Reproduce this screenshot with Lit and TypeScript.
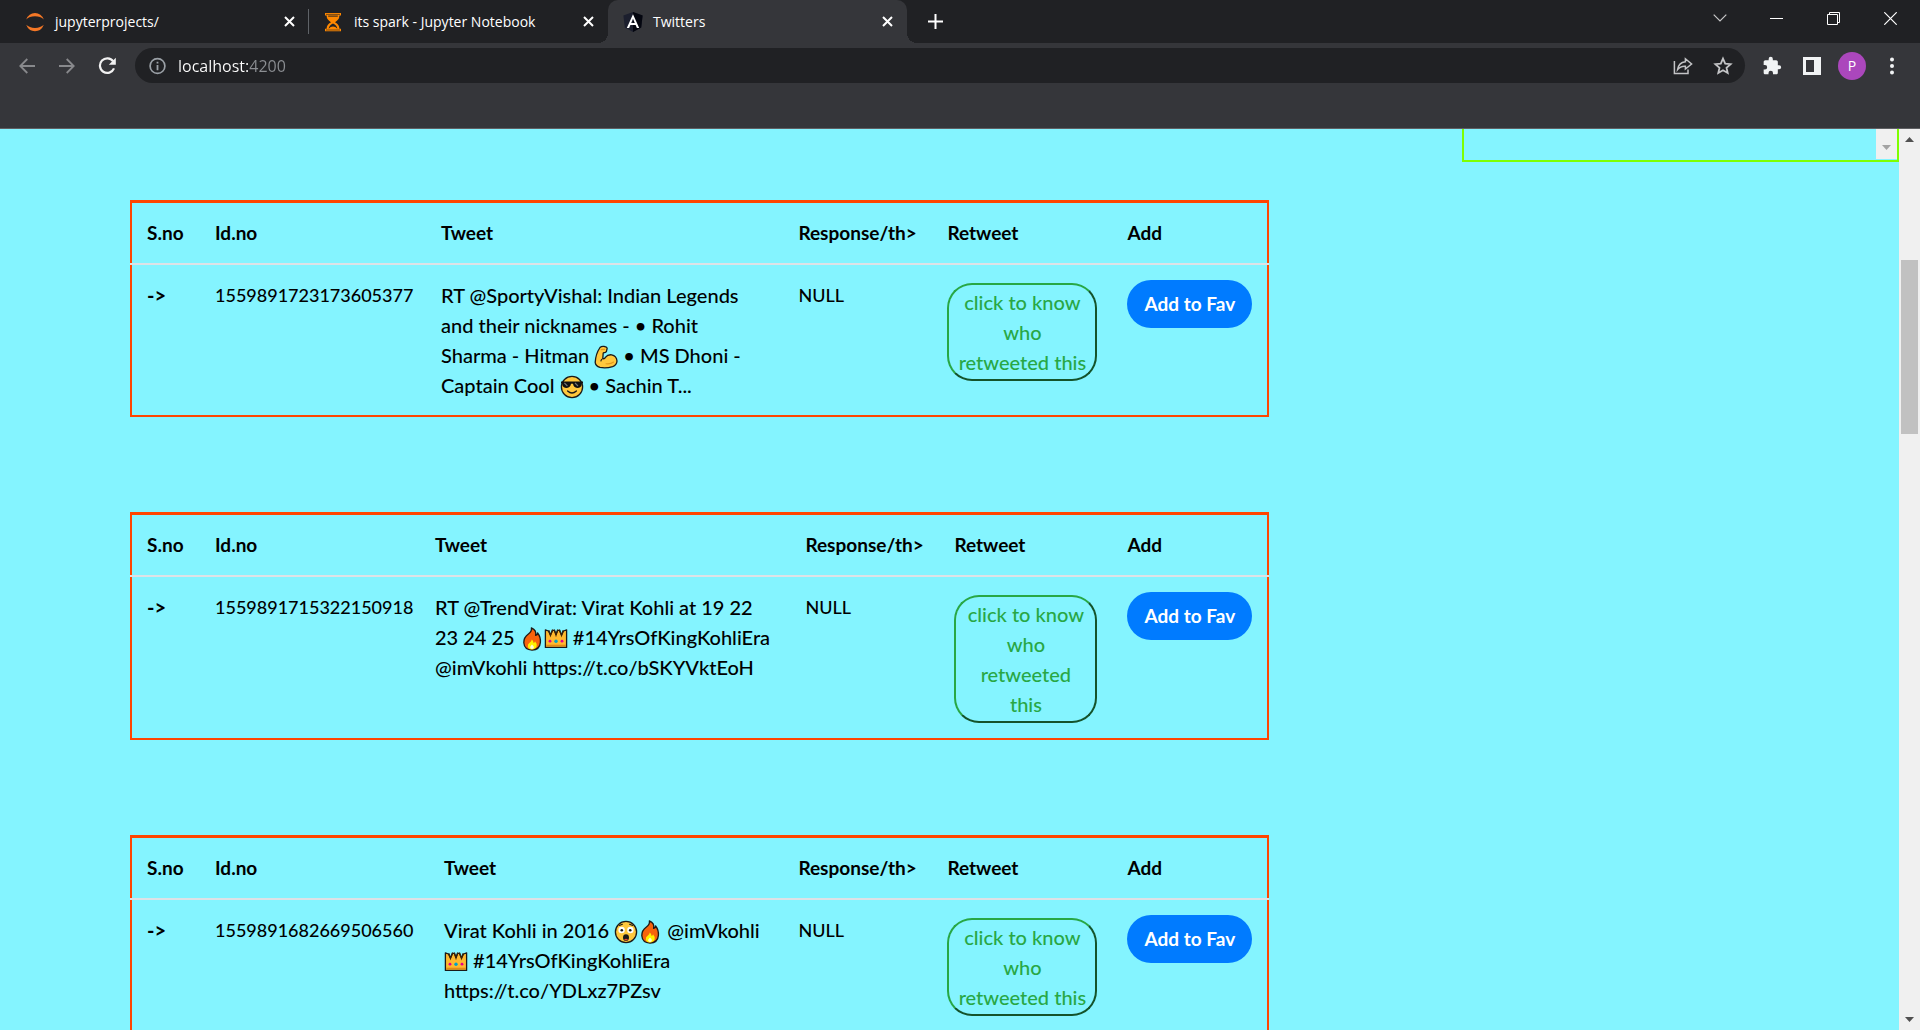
import { LitElement, html, css, svg, nothing } from "lit";
import { customElement, property } from "lit/decorators.js";
import { styleMap } from "lit/directives/style-map.js";

type EmojiName = "biceps" | "cool" | "fire" | "crown" | "astonished";
type Piece = string | { emoji: EmojiName };

interface Tweet {
  id: string;
  lines: Piece[][];
  response: string;
  retweetLabel: string;
  columns: { id: number; response: number; retweet: number };
}

const e = (emoji: EmojiName): Piece => ({ emoji });

const TWEETS: Tweet[] = [
  {
    id: "1559891723173605377",
    lines: [
      ["RT @SportyVishal: Indian Legends"],
      ["and their nicknames - • Rohit"],
      ["Sharma - Hitman ", e("biceps"), " • MS Dhoni -"],
      ["Captain Cool ", e("cool"), " • Sachin T..."],
    ],
    response: "NULL",
    retweetLabel: "click to know\nwho\nretweeted this",
    columns: { id: 226, response: 149, retweet: 180 },
  },
  {
    id: "1559891715322150918",
    lines: [
      ["RT @TrendVirat: Virat Kohli at 19 22"],
      ["23 24 25 ", e("fire"), e("crown"), " #14YrsOfKingKohliEra"],
      ["@imVkohli https://t.co/bSKYVktEoH"],
    ],
    response: "NULL",
    retweetLabel: "click to know\nwho\nretweeted\nthis",
    columns: { id: 220, response: 149, retweet: 173 },
  },
  {
    id: "1559891682669506560",
    lines: [
      ["Virat Kohli in 2016 ", e("astonished"), e("fire"), " @imVkohli"],
      [e("crown"), " #14YrsOfKingKohliEra"],
      ["https://t.co/YDLxz7PZsv"],
    ],
    response: "NULL",
    retweetLabel: "click to know\nwho\nretweeted this",
    columns: { id: 229, response: 149, retweet: 180 },
  },
];

const EMOJI = {
  biceps: {
    label: "flexed biceps",
    art: svg`
      <path d="M6 2.5 Q7.5 1 10 1.4 L12.4 2.2 Q13.6 3 12.8 4.6 L12.4 6.6 Q11.8 8 10 7.6 L9.2 8 L8.8 13.4 Q10.2 14.4 11.4 12.4 Q13.6 9.4 17.6 9.8 Q22.6 10.8 23 16 Q22.8 20 18.6 21.6 Q12 23.6 6 22.4 Q1.6 21.2 1.2 17.4 Q1.6 9 6 2.5Z" fill="#ffc83d" stroke="#1b1a19" stroke-width="1.3" stroke-linejoin="round"/>
      <path d="M7.2 4.6 L10.6 4.4 M12 18.8 Q16.6 19.4 19.6 17" fill="none" stroke="#e59a1c" stroke-width="1.1" stroke-linecap="round"/>
      <path d="M8.6 13.6 Q7 14.6 6.8 16.4" fill="none" stroke="#1b1a19" stroke-width="1.1"/>`,
  },
  cool: {
    label: "smiling face with sunglasses",
    art: svg`
      <circle cx="12" cy="12" r="10.6" fill="#ffc83d" stroke="#1b1a19" stroke-width="1.3"/>
      <path d="M1 6.4 H23 V8.4 H21.8 Q21.4 13 17.2 13 Q13.6 12.8 13 8.8 H11 Q10.4 12.8 6.8 13 Q2.6 13 2.2 8.4 H1Z" fill="#111"/>
      <path d="M4.4 8 L7.4 11 M15 8 L18 11" stroke="#767676" stroke-width="1.1"/>
      <path d="M7.6 16 Q12 20 16.4 16" fill="none" stroke="#1b1a19" stroke-width="1.3" stroke-linecap="round"/>`,
  },
  fire: {
    label: "fire",
    art: svg`
      <path d="M11.4 .8 Q16.8 3 15.6 8.4 Q17.8 7.8 17.6 6 Q20.8 10 20.4 15.4 Q19.8 22.8 12 23.2 Q4.4 22.8 3.8 15.8 Q3.6 10.4 8.4 7 Q12 4.4 11.4 .8Z" fill="#f7630c" stroke="#1b1a19" stroke-width="1.3" stroke-linejoin="round"/>
      <path d="M11.8 12.6 Q13.4 14 13.6 16 Q15.2 15.4 15 14.2 Q17.6 17 16.6 19.6 Q15.4 22.4 12 22.4 Q8.4 22.2 7.8 19.4 Q7.6 17.2 9.6 15.8 Q11.6 14.6 11.8 12.6Z" fill="#fff100"/>
      <path d="M12 17.6 Q14.4 19.4 13.8 21 Q12 22.8 10.2 21 Q9.8 19.4 12 17.6Z" fill="#fffbd6"/>`,
  },
  crown: {
    label: "crown",
    art: svg`
      <path d="M1.4 2.8 L4.4 4 L6.4 8 L8.6 3.4 L10.4 3.4 L12 7.4 L13.6 3.4 L15.4 3.4 L17.6 8 L19.6 4 L22.6 2.8 V20.4 H1.4Z" fill="#ffb92e" stroke="#1b1a19" stroke-width="1.3" stroke-linejoin="round"/>
      <path d="M5 3.6 L6.5 8.4 L8.4 3 M10.4 3 L12 8 L13.6 3 M15.6 3 L17.5 8.4 L19 3.6" fill="none" stroke="#3a2208" stroke-width="1.3" stroke-linecap="round"/>
      <path d="M2.2 18.4 H21.8" stroke="#e58a14" stroke-width="1.4"/>
      <circle cx="6" cy="14.2" r="1.4" fill="#e3008c"/>
      <circle cx="12" cy="14.2" r="1.7" fill="#00a2c9"/>
      <circle cx="18" cy="14.2" r="1.4" fill="#e3008c"/>`,
  },
  astonished: {
    label: "astonished face",
    art: svg`
      <circle cx="12" cy="12" r="10.6" fill="#ffc83d" stroke="#1b1a19" stroke-width="1.3"/>
      <path d="M5.4 5.4 L8.4 4.2 M15.6 4.2 L18.6 5.4" stroke="#1b1a19" stroke-width="1.1" stroke-linecap="round"/>
      <circle cx="7.6" cy="10" r="3.2" fill="#fff"/>
      <circle cx="16.4" cy="10" r="3.2" fill="#fff"/>
      <circle cx="7.8" cy="10.2" r="1.3" fill="#1b1a19"/>
      <circle cx="16.2" cy="10.2" r="1.3" fill="#1b1a19"/>
      <ellipse cx="12" cy="17.6" rx="3" ry="3.4" fill="#1b1a19"/>
      <path d="M10 19.6 Q12 18 14 19.6 Q12 21.6 10 19.6Z" fill="#e8463a"/>`,
  },
};

const ICONS = {
  jupyter: svg`<path d="M1.2 7.4 Q3.8 .9 10 .9 Q16.2 .9 18.8 7.4 Q15.6 4.3 10 4.3 Q4.4 4.3 1.2 7.4Z M1.2 12.8 Q3.8 19.3 10 19.3 Q16.2 19.3 18.8 12.8 Q15.6 15.9 10 15.9 Q4.4 15.9 1.2 12.8Z" fill="#f37726"/>`,
  hourglass: svg`<path d="M1 1 H17 V3.6 H15.4 Q15.4 8 11 10.2 Q15.4 12.6 15.4 16.8 H17 V19.2 H1 V16.8 H2.6 Q2.6 12.6 7 10.2 Q2.6 8 2.6 3.6 H1Z" fill="#ff8800"/>
    <path d="M2 2.4 H16 M2 18 H16" stroke="#202124" stroke-width=".6"/>
    <path d="M4.6 16.8 Q5 13.2 9 11.4 Q13 13.2 13.4 16.8 Q11.4 14.6 9 14.6 Q6.6 14.6 4.6 16.8Z" fill="#202124"/>
    <path d="M4.2 3.6 H13.8 V4.6 H4.2Z" fill="#202124"/>`,
  angular: svg`<path d="M10 0 L19.6 3.4 L18.2 15.6 L10 20 L1.8 15.6 L.4 3.4Z" fill="#1c1f2e"/>
    <path d="M10 0 L19.6 3.4 L18.2 15.6 L10 20Z" fill="#04060f"/>
    <path fill-rule="evenodd" d="M10 2.3 L16.2 16 H13.9 L12.6 12.9 H7.4 L6.1 16 H3.8Z M10 6.7 L8.2 11 H11.8Z" fill="#fff"/>`,
};

const baseButton = css`
  button {
    border: 0;
    margin: 0;
    padding: 0;
    background: none;
    color: inherit;
    font: inherit;
    display: flex;
    align-items: center;
    justify-content: center;
    cursor: pointer;
  }
  svg {
    display: block;
  }
`;

@customElement("browser-chrome")
export class BrowserChrome extends LitElement {
  static styles = [
    baseButton,
    css`
      :host {
        display: block;
        flex: none;
        background: #35363a;
        color: #fff;
        border-bottom: 1px solid #5f6063;
        font-family: "Open Sans", "Noto Sans", sans-serif;
      }
      .strip {
        display: flex;
        height: 43px;
        padding-left: 10px;
        background: #202124;
      }
      .tab {
        position: relative;
        display: flex;
        align-items: center;
        flex: 0 1 299px;
        box-sizing: border-box;
        padding: 0 14px 0 15px;
        font-size: 14px;
      }
      .tab.split::after {
        content: "";
        position: absolute;
        right: 0;
        top: 9px;
        width: 1px;
        height: 25px;
        background: #5f6368;
      }
      .tab.active {
        background: #35363a;
        border-radius: 10px 10px 0 0;
      }
      .tab.active::before,
      .tab.active::after {
        content: "";
        position: absolute;
        bottom: 0;
        width: 10px;
        height: 10px;
      }
      .tab.active::before {
        left: -10px;
        background: radial-gradient(circle at 0 0, #202124 10px, #35363a 10px);
      }
      .tab.active::after {
        right: -10px;
        background: radial-gradient(circle at 100% 0, #202124 10px, #35363a 10px);
      }
      .tab .title {
        flex: 1;
        justify-content: flex-start;
        gap: 10px;
        white-space: nowrap;
        line-height: 20px;
      }
      .newtab {
        width: 56px;
      }
      .window {
        display: flex;
        height: 36px;
        margin-left: auto;
        padding-right: 1px;
      }
      .window button {
        width: 57px;
      }
      .toolbar {
        display: flex;
        align-items: center;
        height: 35px;
        padding: 5px 8px 45px 7px;
      }
      .tool {
        width: 40px;
        height: 35px;
      }
      .omnibox {
        flex: 1;
        display: flex;
        align-items: center;
        height: 35px;
        margin: 0 7px 0 8px;
        padding: 0 2px 0 13px;
        border-radius: 18px;
        background: #202124;
      }
      .omnibox input {
        flex: 1;
        min-width: 0;
        margin: 0 0 0 12px;
        padding: 0;
        border: 0;
        outline: 0;
        font: 16px/24px "Open Sans", "Noto Sans", sans-serif;
        color: transparent;
        background: linear-gradient(to right, #fff 71px, #8b8e92 71px);
        -webkit-background-clip: text;
        background-clip: text;
      }
      .avatar {
        width: 28px;
        height: 28px;
        border-radius: 50%;
        background: #ab47bc;
        font-size: 14px;
        line-height: 28px;
      }
    `,
  ];

  private tab(title: string, icon: keyof typeof ICONS, cls: string) {
    return html`<div class="tab ${cls}">
      <button class="title">
        <svg width="20" height="20" viewBox="0 0 20 20" aria-hidden="true">${ICONS[icon]}</svg>
        ${title}
      </button>
      <button aria-label="Close tab">
        <svg width="11" height="11" viewBox="0 0 11 11"><path d="M1 1 L10 10 M10 1 L1 10" stroke="#fff" stroke-width="2" /></svg>
      </button>
    </div>`;
  }

  render() {
    return html`
      <div class="strip">
        ${this.tab("jupyterprojects/", "jupyter", "split")}
        ${this.tab("its spark - Jupyter Notebook", "hourglass", "")}
        ${this.tab("Twitters", "angular", "active")}
        <button class="newtab" aria-label="New tab">
          <svg width="15" height="15" viewBox="0 0 15 15"><path d="M7.5 0 V15 M0 7.5 H15" stroke="#fff" stroke-width="2" /></svg>
        </button>
        <div class="window">
          <button aria-label="Search tabs">
            <svg width="14" height="8" viewBox="0 0 14 8"><path d="M.7 .7 L7 7 L13.3 .7" fill="none" stroke="#c8c8c9" stroke-width="1.2" /></svg>
          </button>
          <button aria-label="Minimize">
            <svg width="13" height="13" viewBox="0 0 13 13"><path d="M0 6.5 H13" stroke="#fff" /></svg>
          </button>
          <button aria-label="Restore">
            <svg width="13" height="13" viewBox="0 0 13 13"><path d="M.5 2.5 H10.5 V12.5 H.5Z M2.5 2.5 V.5 H12.5 V10.5 H10.5" fill="none" stroke="#fff" /></svg>
          </button>
          <button aria-label="Close">
            <svg width="13" height="13" viewBox="0 0 13 13"><path d="M.3 .3 L12.7 12.7 M12.7 .3 L.3 12.7" stroke="#fff" stroke-width="1.2" /></svg>
          </button>
        </div>
      </div>
      <div class="toolbar">
        <button class="tool" aria-label="Back">
          <svg width="16" height="16" viewBox="0 0 16 16"><path d="M16 8 H1.5 M8.3 1 L1.3 8 L8.3 15" fill="none" stroke="#88898c" stroke-width="1.8" /></svg>
        </button>
        <button class="tool" aria-label="Forward">
          <svg width="16" height="16" viewBox="0 0 16 16"><path d="M0 8 H14.5 M7.7 1 L14.7 8 L7.7 15" fill="none" stroke="#88898c" stroke-width="1.8" /></svg>
        </button>
        <button class="tool" aria-label="Reload">
          <svg width="18" height="18" viewBox="0 0 18 18">
            <path d="M15.2 4.4 A7.3 7.3 0 1 0 16 11.4" fill="none" stroke="#f1f1f1" stroke-width="2.2" />
            <path d="M17.8 .8 V7.8 H10.8Z" fill="#f1f1f1" />
          </svg>
        </button>
        <div class="omnibox">
          <svg width="18" height="18" viewBox="0 0 18 18" aria-hidden="true">
            <circle cx="9.5" cy="9" r="7.4" fill="none" stroke="#9aa0a6" stroke-width="1.7" />
            <path d="M9.5 8 V13.2 M9.5 4.8 V6.6" stroke="#9aa0a6" stroke-width="1.8" />
          </svg>
          <input type="text" aria-label="Address" .value=${"localhost:4200"} />
          <button class="tool" aria-label="Share">
            <svg width="20" height="18" viewBox="0 0 20 18">
              <path d="M1.4 4 V16.6 H15 V12.4" fill="none" stroke="#c3c4c6" stroke-width="1.5" />
              <path d="M12.4 1.8 L18.6 7 L12.4 12 V9.2 Q7.6 8.8 4.6 12.6 Q5.6 5.6 12.4 4.8Z" fill="none" stroke="#c3c4c6" stroke-width="1.5" />
            </svg>
          </button>
          <button class="tool" aria-label="Bookmark">
            <svg width="20" height="20" viewBox="0 0 20 20">
              <path d="M10 2.6 L12.2 7.6 L17.6 8.1 L13.5 11.7 L14.7 17 L10 14.2 L5.3 17 L6.5 11.7 L2.4 8.1 L7.8 7.6Z" fill="none" stroke="#c3c4c6" stroke-width="1.8" />
            </svg>
          </button>
        </div>
        <button class="tool" aria-label="Extensions">
          <svg width="20" height="20" viewBox="0 0 24 24">
            <path d="M20.5 11H19V7c0-1.1-.9-2-2-2h-4V3.5a2.5 2.5 0 0 0-5 0V5H4c-1.1 0-2 .9-2 2v3.8h1.5a2.7 2.7 0 0 1 0 5.4H2V20c0 1.1.9 2 2 2h3.8v-1.5a2.7 2.7 0 0 1 5.4 0V22H17c1.1 0 2-.9 2-2v-4h1.5a2.5 2.5 0 0 0 0-5z" fill="#f1f3f4" />
          </svg>
        </button>
        <button class="tool" aria-label="Side panel">
          <svg width="18" height="18" viewBox="0 0 18 18">
            <path fill-rule="evenodd" d="M0 0 H18 V18 H0Z M3 3 V15 H11 V3Z" fill="#f1f3f4" />
          </svg>
        </button>
        <button class="tool" aria-label="Profile"><span class="avatar">P</span></button>
        <button class="tool" aria-label="Menu">
          <svg width="18" height="18" viewBox="0 0 18 18" fill="#f1f3f4">
            <circle cx="9" cy="2.6" r="2" /><circle cx="9" cy="9" r="2" /><circle cx="9" cy="15.4" r="2" />
          </svg>
        </button>
      </div>
    `;
  }
}

@customElement("tweet-table")
export class TweetTable extends LitElement {
  @property({ attribute: false }) tweet!: Tweet;

  static styles = css`
    :host {
      display: block;
    }
    table {
      width: 100%;
      table-layout: fixed;
      border-collapse: collapse;
      border: 2px solid #ff4500;
      border-top-width: 3px;
      color: #000;
      font: 500 20px/30px Lato, "Open Sans", sans-serif;
      white-space: nowrap;
    }
    th,
    td {
      padding: 15px;
      text-align: left;
      vertical-align: top;
    }
    th {
      font-size: 19px;
      font-weight: 700;
      border-bottom: 2px solid #dee2e6;
    }
    .sno {
      width: 69px;
    }
    .add {
      width: 156px;
    }
    .arrow {
      font-weight: 700;
    }
    .compact {
      font-size: 18px;
    }
    .line {
      display: block;
    }
    .emoji {
      width: 24px;
      height: 24px;
      vertical-align: -6px;
    }
    button {
      box-sizing: border-box;
      width: 100%;
      border-radius: 25px;
      font: 500 20px/30px Lato, "Open Sans", sans-serif;
      cursor: pointer;
    }
    .retweet {
      display: block;
      margin-top: 3px;
      padding: 2px;
      border: 2px solid;
      border-color: #28a745 #14532b #14532b #28a745;
      background: transparent;
      color: #28a745;
      white-space: pre-line;
    }
    .fav {
      display: block;
      padding: 9px 0;
      border: 0;
      background: #007bff;
      color: #fff;
      font-size: 19px;
      font-weight: 700;
      white-space: nowrap;
    }
  `;

  private piece(p: Piece) {
    if (typeof p === "string") return p;
    const { label, art } = EMOJI[p.emoji];
    return html`<svg class="emoji" viewBox="0 0 24 24" role="img" aria-label=${label}>${art}</svg>`;
  }

  render() {
    if (!this.tweet) return nothing;
    const { id, lines, response, retweetLabel, columns } = this.tweet;
    const width = (px: number) => styleMap({ width: `${px}px` });
    return html`
      <table>
        <colgroup>
          <col class="sno" />
          <col style=${width(columns.id)} />
          <col />
          <col style=${width(columns.response)} />
          <col style=${width(columns.retweet)} />
          <col class="add" />
        </colgroup>
        <thead>
          <tr>
            <th>S.no</th>
            <th>Id.no</th>
            <th>Tweet</th>
            <th>Response/th&gt;</th>
            <th>Retweet</th>
            <th>Add</th>
          </tr>
        </thead>
        <tbody>
          <tr>
            <td class="arrow">-&gt;</td>
            <td class="compact">${id}</td>
            <td>${lines.map((line) => html`<span class="line">${line.map((p) => this.piece(p))}</span>`)}</td>
            <td class="compact">${response}</td>
            <td><button class="retweet">${retweetLabel}</button></td>
            <td><button class="fav">Add to Fav</button></td>
          </tr>
        </tbody>
      </table>
    `;
  }
}

@customElement("app-root")
export class AppRoot extends LitElement {
  static styles = [
    baseButton,
    css`
      :host {
        display: flex;
        flex-direction: column;
        height: 100vh;
        overflow: hidden;
      }
      .view {
        flex: 1;
        min-height: 0;
        display: flex;
      }
      main {
        flex: 1;
        min-width: 0;
        overflow: hidden;
        background: #84f4ff;
      }
      .panel {
        display: flex;
        justify-content: flex-end;
        box-sizing: border-box;
        width: 23%;
        height: 33px;
        margin-left: auto;
        padding-bottom: 1px;
        border: solid #7fff00;
        border-width: 0 2px 2px;
      }
      .panel button {
        width: 21px;
        padding-top: 6px;
        background: #f0f0f0;
      }
      .list {
        display: flex;
        flex-direction: column;
        gap: 95px;
        width: 60%;
        margin: 38px 0 0 130px;
      }
      .scroll {
        flex: none;
        display: flex;
        flex-direction: column;
        align-items: center;
        width: 21px;
        background: #f0f0f0;
      }
      .scroll button {
        width: 21px;
        height: 21px;
      }
      .track {
        flex: 1;
        display: flex;
        flex-direction: column;
        width: 17px;
      }
      .before {
        flex: 110;
      }
      .thumb {
        flex: 174;
        background: #c1c1c1;
      }
      .after {
        flex: 575;
      }
    `,
  ];

  private arrow(direction: "up" | "down", color: string) {
    const d = direction === "up" ? "M0 5 L4.5 0 L9 5Z" : "M0 0 L4.5 5 L9 0Z";
    return html`<svg width="9" height="5" viewBox="0 0 9 5"><path d=${d} fill=${color} /></svg>`;
  }

  render() {
    return html`
      <browser-chrome></browser-chrome>
      <div class="view">
        <main>
          <div class="panel">
            <button aria-label="Scroll panel down">${this.arrow("down", "#a3a3a3")}</button>
          </div>
          <div class="list">
            ${TWEETS.map((t) => html`<tweet-table .tweet=${t}></tweet-table>`)}
          </div>
        </main>
        <div class="scroll">
          <button aria-label="Scroll up">${this.arrow("up", "#505050")}</button>
          <div class="track">
            <div class="before"></div>
            <div class="thumb"></div>
            <div class="after"></div>
          </div>
          <button aria-label="Scroll down">${this.arrow("down", "#505050")}</button>
        </div>
      </div>
    `;
  }
}
